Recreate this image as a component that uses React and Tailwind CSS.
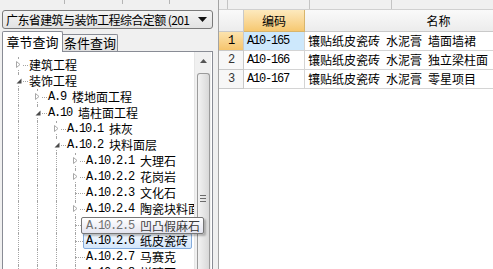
import React from "react";

const Code = ({ children, className = "" }) => (
  <span className={`font-['Liberation_Mono',monospace] text-[12px] tracking-[-1.2px] ${className}`}>{children}</span>
);

const tree = [
  { level: 0, name: "建筑工程", kind: "closed" },
  { level: 0, name: "装饰工程", kind: "open" },
  { level: 1, code: "A.9", name: "楼地面工程", kind: "closed" },
  { level: 1, code: "A.10", name: "墙柱面工程", kind: "open" },
  { level: 2, code: "A.10.1", name: "抹灰", kind: "closed" },
  { level: 2, code: "A.10.2", name: "块料面层", kind: "open" },
  { level: 3, code: "A.10.2.1", name: "大理石", kind: "closed" },
  { level: 3, code: "A.10.2.2", name: "花岗岩", kind: "closed" },
  { level: 3, code: "A.10.2.3", name: "文化石", kind: "leaf" },
  { level: 3, code: "A.10.2.4", name: "陶瓷块料面层", kind: "closed" },
  { level: 3, code: "A.10.2.5", name: "凹凸假麻石", kind: "leaf" },
  { level: 3, code: "A.10.2.6", name: "纸皮瓷砖", kind: "leaf", selected: true },
  { level: 3, code: "A.10.2.7", name: "马赛克", kind: "leaf" },
  { level: 3, code: "A.10.2.8", name: "拼碎石", kind: "leaf" },
];

const rows = [
  { n: "1", code: "A10-165", name: ["镶贴纸皮瓷砖", "水泥膏", "墙面墙裙"], current: true },
  { n: "2", code: "A10-166", name: ["镶贴纸皮瓷砖", "水泥膏", "独立梁柱面"] },
  { n: "3", code: "A10-167", name: ["镶贴纸皮瓷砖", "水泥膏", "零星项目"] },
];

// x of the tree guide for each level, the expander box and the text start
const guideX = ["left-[15px]", "left-[34px]", "left-[53px]", "left-[72px]"];
const expX = ["left-[11px]", "left-[30px]", "left-[49px]", "left-[68px]"];
const textPl = ["pl-[26px]", "pl-[45px]", "pl-[64px]", "pl-[83px]"];

const Closed = () => (
  <svg width="9" height="9" viewBox="0 0 9 9">
    <path d="M2.5 1.5L6 4.5L2.5 7.5Z" fill="#fff" stroke="#a8a8a8" />
  </svg>
);

const Open = () => (
  <svg width="9" height="9" viewBox="0 0 9 9">
    <path d="M7.5 2.5L7.5 7.5L2.5 7.5Z" fill="#4a4a4a" />
  </svg>
);

const Label = ({ code, name }) => (
  <span className="flex items-center gap-[6px]">
    {code && <Code>{code}</Code>}
    <span className="text-[12px]">{name}</span>
  </span>
);

function TreeRow({ node }) {
  const { level, code, name, kind, selected } = node;
  const guides = [];
  for (let l = 0; l <= level; l++) {
    guides.push(
      <span key={l} className={`absolute top-0 bottom-0 border-l border-dotted border-[#a5a5a5] ${guideX[l]}`} />
    );
  }
  return (
    <div className={`relative h-[16px] flex items-center whitespace-nowrap text-black ${textPl[level]}`}>
      {guides}
      <span className={`absolute top-[8px] w-[10px] border-t border-dotted border-[#a5a5a5] ${guideX[level]}`} />
      {kind !== "leaf" && (
        <span className={`absolute top-[3px] w-[9px] h-[9px] bg-white flex ${expX[level]}`}>
          {kind === "open" ? <Open /> : <Closed />}
        </span>
      )}
      {selected ? (
        <span className="relative h-[16px] ml-[-3px] pl-[2px] pr-[3px] flex items-center border border-[#84acdd] rounded-[2px] bg-gradient-to-b from-[#f2f8fe] to-[#d3e6fb]">
          <Label code={code} name={name} />
        </span>
      ) : (
        <span className="relative bg-white">
          <Label code={code} name={name} />
        </span>
      )}
    </div>
  );
}

export default function App() {
  return (
    <div className="w-[493px] h-[269px] overflow-hidden flex bg-[#f0f0f0] font-['Noto_Sans_CJK_SC','Noto_Sans_CJK_JP',sans-serif] leading-[16px] select-none">
      {/* left: chapter tree */}
      <div className="w-[215px] shrink-0 flex flex-col">
        <div className="h-[4px] shrink-0 flex">
          <span className="w-[65px] border-r border-[#b5b5b5]" />
          <span className="w-[58px] border-r border-[#b5b5b5]" />
          <span className="w-[47px] border-r border-[#b5b5b5]" />
        </div>

        <div className="mt-[6px] mx-[2px] h-[19px] shrink-0 flex items-center border border-[#7a7a7a] rounded-[3px] bg-gradient-to-b from-[#f4f4f4] to-[#e2e2e2]">
          <span className="flex-1 overflow-hidden whitespace-nowrap pl-[3px] text-[12px] tracking-[-0.6px] text-black">
            广东省建筑与装饰工程综合定额 (201
          </span>
          <svg width="9" height="5" viewBox="0 0 9 5" className="mx-[5px] shrink-0">
            <path d="M0 0H9L4.5 5Z" fill="#111" />
          </svg>
        </div>

        <div className="mt-[2px] h-[20px] shrink-0 flex items-end px-[2px]">
          <div className="relative z-10 h-[21px] mb-[-1px] w-[61px] flex items-center justify-center bg-white border border-b-0 border-[#898c95] rounded-t-[2px] text-[13px] text-black">
            章节查询
          </div>
          <div className="h-[17px] w-[55px] flex items-center justify-center border border-l-0 border-b-0 border-[#898c95] rounded-tr-[2px] bg-gradient-to-b from-[#f6f6f6] to-[#e0e0e0] text-[13px] text-black">
            条件查询
          </div>
        </div>

        <div className="relative mx-[2px] h-[240px] shrink-0 flex border border-[#898c95] bg-white">
          <div className="flex-1 overflow-hidden pt-[5px]">
            {tree.map((n) => (
              <TreeRow key={n.name} node={n} />
            ))}
          </div>
          <div className="w-[17px] mr-[1px] shrink-0 flex flex-col items-center bg-[#f0f0f0] border-l border-[#e6e6e6]">
            <div className="h-[18px] flex items-center justify-center">
              <svg width="7" height="4" viewBox="0 0 7 4">
                <path d="M0 4L3.5 0L7 4Z" fill="#555" />
              </svg>
            </div>
            <div className="mt-[3px] w-[13px] flex-1 flex flex-col items-center gap-[2px] pt-[121px] rounded-t-[3px] border border-b-0 border-[#9b9b9b] bg-gradient-to-r from-[#f3f3f3] to-[#d9d9d9]">
              <span className="w-[6px] border-t border-[#6b6b6b]" />
              <span className="w-[6px] border-t border-[#6b6b6b]" />
              <span className="w-[6px] border-t border-[#6b6b6b]" />
            </div>
          </div>

          {/* hover tooltip over the clipped node */}
          <div className="absolute top-[165px] left-[78px] z-20 w-max h-[17px] flex items-center gap-[6px] pl-[4px] pr-[3px] whitespace-nowrap border border-[#767676] rounded-[2px] bg-gradient-to-b from-white to-[#e4e5f0] shadow-[2px_2px_2px_rgba(0,0,0,0.25)]">
            <Code className="text-[#707070]">A.10.2.5</Code>
            <span className="text-[12px] text-[#3a3a3a]">凹凸假麻石</span>
          </div>
        </div>
      </div>

      {/* splitter */}
      <div className="w-[3px] shrink-0" />

      {/* right: quota grid */}
      <div className="flex-1 min-w-0 flex flex-col overflow-hidden bg-white border-l border-[#a3a3a3]">
        <div className="h-[10px] shrink-0 flex bg-[#f0f0f0] border-b border-[#d0d0d0]">
          <span className="w-[9px] shrink-0 border-r border-[#c4c4c4]" />
          <span className="w-[82px] shrink-0 border-r border-[#c4c4c4]" />
          <span className="w-[82px] shrink-0 border-r border-[#c4c4c4]" />
        </div>

        <div className="h-[22px] shrink-0 flex text-[12px] text-black">
          <div className="w-[25px] shrink-0 border-r border-b border-[#c9c9c9] bg-gradient-to-b from-[#fafafa] to-[#ececec]" />
          <div className="w-[61px] shrink-0 flex items-center justify-center border-r border-b border-[#d8b56c] bg-gradient-to-b from-[#fde9bd] to-[#f6c870]">
            编码
          </div>
          <div className="w-[268px] shrink-0 flex items-center justify-center border-r border-b border-[#c9c9c9] bg-gradient-to-b from-[#fafafa] to-[#ececec]">
            名称
          </div>
        </div>

        {rows.map((r) => (
          <div key={r.n} className="h-[19px] shrink-0 flex text-black">
            <div
              className={`w-[25px] shrink-0 flex items-center justify-center border-r border-b border-[#c9c9c9] ${
                r.current ? "bg-gradient-to-b from-[#fce3ad] to-[#f5c46c]" : "bg-[#f7f7f7] text-[#333]"
              }`}
            >
              <Code>{r.n}</Code>
            </div>
            <div
              className={`w-[61px] shrink-0 flex items-center pl-[3px] border-r border-b border-[#d4d4d4] ${
                r.current ? "bg-[#cde8fc]" : ""
              }`}
            >
              <Code>{r.code}</Code>
            </div>
            <div className="w-[268px] shrink-0 flex items-center gap-[6px] pl-[3px] border-r border-b border-[#d4d4d4] whitespace-nowrap text-[12px]">
              {r.name.map((w) => (
                <span key={w}>{w}</span>
              ))}
            </div>
          </div>
        ))}
      </div>
    </div>
  );
}
